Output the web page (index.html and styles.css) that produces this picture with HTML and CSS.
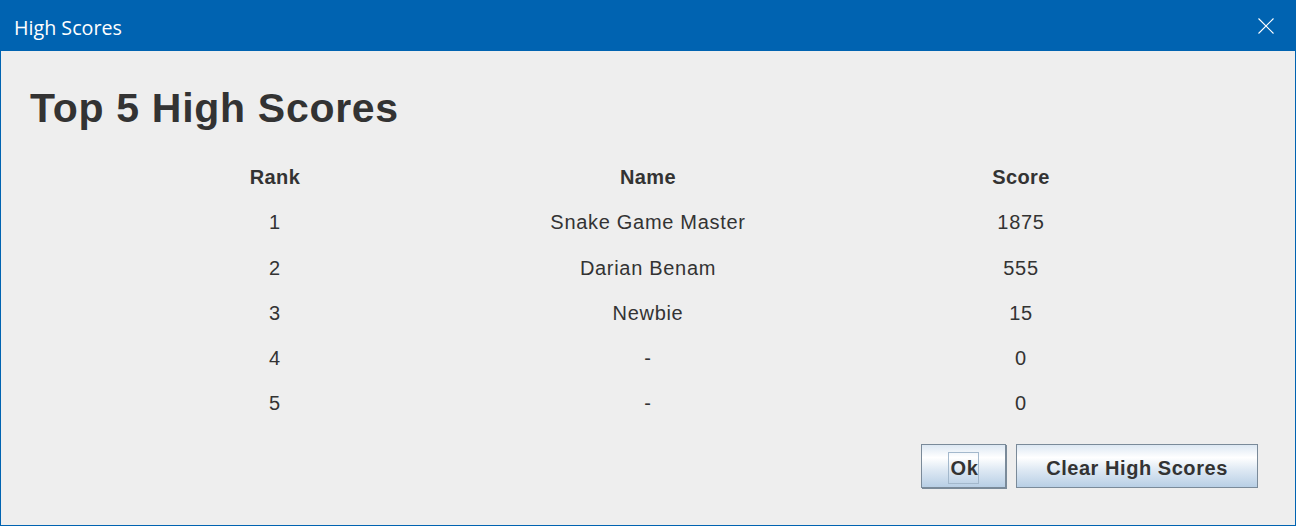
FILE: index.html
```html
<!DOCTYPE html>
<html>
<head>
<meta charset="utf-8">
<link rel="stylesheet" href="styles.css">
</head>
<body>
<div class="window">
  <div class="titlebar">
    <span class="title">High Scores</span>
    <svg class="close" width="16" height="16" viewBox="0 0 16 16">
      <path d="M0.5 0.5 L15.5 15.5 M15.5 0.5 L0.5 15.5" stroke="#ffffff" stroke-width="1.1" fill="none"/>
    </svg>
  </div>
  <div class="content">
    <h1 class="heading">Top 5 High Scores</h1>
    <div class="table">
      <div class="th">Rank</div><div class="th">Name</div><div class="th">Score</div>
      <div class="td">1</div><div class="td">Snake Game Master</div><div class="td">1875</div>
      <div class="td">2</div><div class="td">Darian Benam</div><div class="td">555</div>
      <div class="td">3</div><div class="td">Newbie</div><div class="td">15</div>
      <div class="td">4</div><div class="td">-</div><div class="td">0</div>
      <div class="td">5</div><div class="td">-</div><div class="td">0</div>
    </div>
    <div class="buttons">
      <button class="btn btn-default"><span class="focus">Ok</span></button>
      <button class="btn btn-wide">Clear High Scores</button>
    </div>
  </div>
</div>
</body>
</html>
```

FILE: styles.css
```css
html, body {
  margin: 0;
  padding: 0;
  background: #eeeeee;
}
.window {
  width: 1296px;
  height: 526px;
  box-sizing: border-box;
  border: 1px solid #0063b1;
  border-top: none;
  background: #eeeeee;
  display: flex;
  flex-direction: column;
  overflow: hidden;
}
.titlebar {
  height: 51px;
  margin: 0 -1px;
  background: #0063b1;
  display: flex;
  align-items: center;
  justify-content: space-between;
  padding: 0 22px 0 14px;
  flex: none;
}
.title {
  font-family: "Open Sans", "Noto Sans", sans-serif;
  font-size: 19.7px;
  color: #ffffff;
  line-height: 24px;
  margin-top: 5px;
}
.close {
  display: block;
  margin-top: 1px;
}
.content {
  flex: 1;
  display: flex;
  flex-direction: column;
  padding: 34px 37px 0 29px;
  font-family: "Liberation Sans", Arial, sans-serif;
  color: #333333;
}
.heading {
  margin: 0;
  font-size: 41px;
  line-height: 46px;
  font-weight: bold;
  color: #333333;
  letter-spacing: 0.7px;
}
.table {
  margin-top: 24px;
  align-self: center;
  margin-left: 8px;
  display: grid;
  grid-template-columns: 373px 373px 373px;
  grid-auto-rows: 45.25px;
  font-size: 20px;
  letter-spacing: 0.7px;
}
.th, .td {
  text-align: center;
  line-height: 45.25px;
}
.th {
  font-weight: bold;
  letter-spacing: 0.4px;
}
.buttons {
  margin-top: 17px;
  display: flex;
  justify-content: flex-end;
  gap: 10px;
}
.btn {
  height: 44px;
  box-sizing: border-box;
  border: 1px solid #7a8a99;
  background: linear-gradient(#dde8f3 0%, #ffffff 30%, #dde8f3 60%, #b8cfe5 100%);
  font-family: "Liberation Sans", Arial, sans-serif;
  font-weight: bold;
  font-size: 20px;
  letter-spacing: 0.55px;
  color: #333333;
  padding: 6px 0 0 0;
  display: flex;
  align-items: center;
  justify-content: center;
}
.btn-default {
  width: 85px;
  box-shadow: 1px 1px 0 #7a8a99;
  padding-top: 4px;
}
.btn-wide {
  width: 242px;
}
.focus {
  border: 1px solid #a3b8cc;
  padding: 2px 0 2px 2px;
  line-height: 26px;
}
```
